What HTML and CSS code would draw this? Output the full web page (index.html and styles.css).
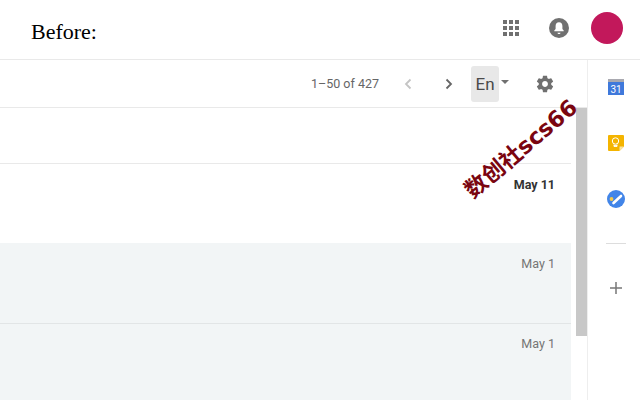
FILE: index.html
```html
<!DOCTYPE html>
<html lang="en">
<head>
    <meta charset="UTF-8">
    <meta name="viewport" content="width=device-width, initial-scale=1.0">
    <title>Before</title>
    <link rel="stylesheet" href="styles.css">
</head>
<body>
    <header class="topbar">
        <div class="caption">Before:</div>
        <svg class="apps" width="16" height="16" viewBox="0 0 16 16">
            <g fill="#707070">
                <rect x="0" y="0" width="4" height="4"/><rect x="6" y="0" width="4" height="4"/><rect x="12" y="0" width="4" height="4"/>
                <rect x="0" y="6" width="4" height="4"/><rect x="6" y="6" width="4" height="4"/><rect x="12" y="6" width="4" height="4"/>
                <rect x="0" y="12" width="4" height="4"/><rect x="6" y="12" width="4" height="4"/><rect x="12" y="12" width="4" height="4"/>
            </g>
        </svg>
        <svg class="bell" width="20" height="20" viewBox="0 0 20 20">
            <circle cx="10" cy="10" r="10" fill="#707070"/>
            <path d="M10 4.200c-2.200 0-3.400 1.700-3.400 3.800v3l-1.300 1.600v.7h9.400v-.7L13.400 11V8c0-2.100-1.200-3.800-3.400-3.800z" fill="#fff"/>
            <path d="M8.500 14.800h3c0 .8-.7 1.300-1.500 1.300s-1.500-.5-1.500-1.300z" fill="#fff"/>
        </svg>
        <div class="avatar"></div>
    </header>

    <div class="content">
        <main class="mail">
            <div class="toolbar">
                <span class="count">1–50 of 427</span>
                <svg class="chev" width="10" height="12" viewBox="0 0 10 12"><path d="M7.500 1.500 3 6l4.500 4.500" fill="none" stroke="#c4c4c4" stroke-width="1.800"/></svg>
                <svg class="chev next" width="10" height="12" viewBox="0 0 10 12"><path d="M2.500 1.500 7 6l-4.500 4.500" fill="none" stroke="#666" stroke-width="1.800"/></svg>
                <div class="lang">En</div>
                <div class="caret"></div>
                <svg class="gear" width="20" height="20" viewBox="0 0 24 24"><path fill="#707070" d="M19.430 12.980c.04-.32.07-.64.07-.98s-.03-.66-.07-.98l2.110-1.650c.19-.15.24-.42.12-.64l-2-3.460c-.12-.22-.39-.3-.61-.22l-2.490 1c-.52-.4-1.080-.73-1.690-.98l-.38-2.650C14.460 2.180 14.250 2 14 2h-4c-.25 0-.46.18-.49.42l-.38 2.650c-.61.25-1.170.59-1.690.98l-2.490-1c-.23-.09-.49 0-.61.22l-2 3.460c-.13.22-.07.49.12.64l2.110 1.650c-.04.32-.07.65-.07.98s.03.66.07.98l-2.110 1.650c-.19.15-.24.42-.12.64l2 3.460c.12.22.39.3.61.22l2.490-1c.52.4 1.080.73 1.690.98l.38 2.650c.03.24.24.42.49.42h4c.25 0 .46-.18.49-.42l.38-2.650c.61-.25 1.170-.59 1.690-.98l2.490 1c.23.09.49 0 .61-.22l2-3.460c.12-.22.07-.49-.12-.64l-2.110-1.650zM12 15.500c-1.930 0-3.500-1.570-3.500-3.500s1.570-3.500 3.500-3.500 3.500 1.570 3.500 3.500-1.570 3.500-3.500 3.500z"/></svg>
            </div>
            <div class="list-wrap">
                <div class="list">
                    <div class="row row-empty"></div>
                    <div class="row row-unread"><span class="date">May 11</span></div>
                    <div class="row row-read"><span class="date">May 1</span></div>
                    <div class="row row-read row-last"><span class="date">May 1</span></div>
                </div>
                <div class="scroll-track"><div class="scroll-thumb"></div></div>
            </div>
        </main>

        <aside class="side">
            <svg class="side-icon" width="16" height="16" viewBox="0 0 16 16">
                <rect x="0" y="0" width="16" height="4" fill="#a9a9b0"/>
                <rect x="0" y="3" width="16" height="13" fill="#3f79db"/>
                <text x="8" y="13.500" text-anchor="middle" class="cal-num">31</text>
            </svg>
            <svg class="side-icon" width="16" height="16" viewBox="0 0 16 16">
                <path d="M1 0h14a1 1 0 0 1 1 1v10.500L11.500 16H1a1 1 0 0 1-1-1V1a1 1 0 0 1 1-1z" fill="#f4b400"/>
                <path d="M16 11.500h-4.500V16z" fill="#fbe3a0"/>
                <circle cx="7.500" cy="6" r="3.200" fill="none" stroke="#fff" stroke-width="1"/>
                <path d="M6 9.500v2h3v-2M6 10.500h3" fill="none" stroke="#fff" stroke-width=".9"/>
            </svg>
            <svg class="side-icon" width="18" height="18" viewBox="0 0 18 18">
                <circle cx="9" cy="9" r="9" fill="#4285e8"/>
                <path d="M6.500 13 14 6" stroke="#fff" stroke-width="2.600" stroke-linecap="round"/>
                <circle cx="4.500" cy="9" r="1.900" fill="#f4c84a"/>
            </svg>
            <div class="side-divider"></div>
            <svg class="plus" width="12" height="12" viewBox="0 0 12 12"><path d="M6 0v12M0 6h12" stroke="#777" stroke-width="1.500"/></svg>
        </aside>
    </div>

    <div class="watermark">数创社scs66</div>
</body>
</html>
```

FILE: styles.css
```css
html, body {
    margin: 0;
    padding: 0;
}
body {
    width: 640px;
    height: 400px;
    overflow: hidden;
    background-color: #fff;
    font-family: 'Roboto', sans-serif;
    position: relative;
}
.topbar {
    height: 56px;
    border-bottom: 1px solid #e9e9e9;
    display: flex;
    align-items: center;
    padding: 0 17px 3px 31px;
}
.caption {
    font-family: 'Liberation Serif', serif;
    font-size: 22px;
    color: #000;
    margin-right: auto;
    position: relative;
    top: 4px;
}
.apps {
    margin-right: 30px;
}
.bell {
    margin-right: 22px;
}
.avatar {
    width: 32px;
    height: 32px;
    border-radius: 50%;
    background-color: #c2185b;
}
.content {
    display: flex;
    height: 340px;
}
.mail {
    width: 587px;
    display: flex;
    flex-direction: column;
}
.toolbar {
    height: 47px;
    border-bottom: 1px solid #e9e9e9;
    display: flex;
    align-items: center;
    padding-right: 32px;
    justify-content: flex-end;
}
.count {
    font-size: 12.500px;
    color: #666;
    margin-right: 24px;
}
.chev {
    margin-right: 31px;
}
.chev.next {
    margin-right: 17px;
}
.lang {
    width: 28px;
    height: 36px;
    line-height: 36px;
    background-color: #e8e8e8;
    border-radius: 3px;
    text-align: center;
    font-size: 17px;
    color: #4a4a4a;
}
.caret {
    width: 0;
    height: 0;
    border-left: 4px solid transparent;
    border-right: 4px solid transparent;
    border-top: 4px solid #707070;
    margin: 0 26px 4px 2px;
}
.list-wrap {
    flex: 1;
    display: flex;
}
.list {
    width: 571px;
}
.row {
    box-sizing: border-box;
    display: flex;
    justify-content: flex-end;
    padding: 13px 16px 0 0;
    font-size: 12.500px;
    color: #757575;
}
.row-empty {
    height: 56px;
    border-bottom: 1px solid #e9e9e9;
}
.row-unread {
    height: 79px;
    color: #333;
    font-weight: 700;
}
.row-read {
    height: 81px;
    background-color: #f2f5f6;
    border-bottom: 1px solid #e2e5e6;
}
.row-last {
    height: 76px;
    padding-top: 12px;
    border-bottom: none;
}
.scroll-track {
    width: 11px;
    margin-left: 5px;
}
.scroll-thumb {
    height: 228px;
    background-color: #c8c8c8;
}
.side {
    width: 48px;
    padding-left: 4px;
    border-left: 1px solid #eee;
    display: flex;
    flex-direction: column;
    align-items: center;
}
.side-icon {
    flex: none;
    margin-top: 19px;
}
.side-icon:nth-child(2) {
    margin-top: 40px;
}
.side-icon:nth-child(3) {
    margin-top: 39px;
}
.cal-num {
    font-size: 10px;
    fill: #fff;
    font-family: 'Roboto', sans-serif;
}
.side-divider {
    width: 20px;
    height: 1px;
    background-color: #ddd;
    margin-top: 35px;
}
.plus {
    margin-top: 38px;
}
.watermark {
    position: absolute;
    left: 450px;
    top: 131px;
    font-family: 'DejaVu Sans', 'Noto Sans CJK SC', sans-serif;
    font-size: 22.500px;
    font-weight: 700;
    color: #7a0510;
    white-space: nowrap;
    transform: rotate(-40deg);
}
```
